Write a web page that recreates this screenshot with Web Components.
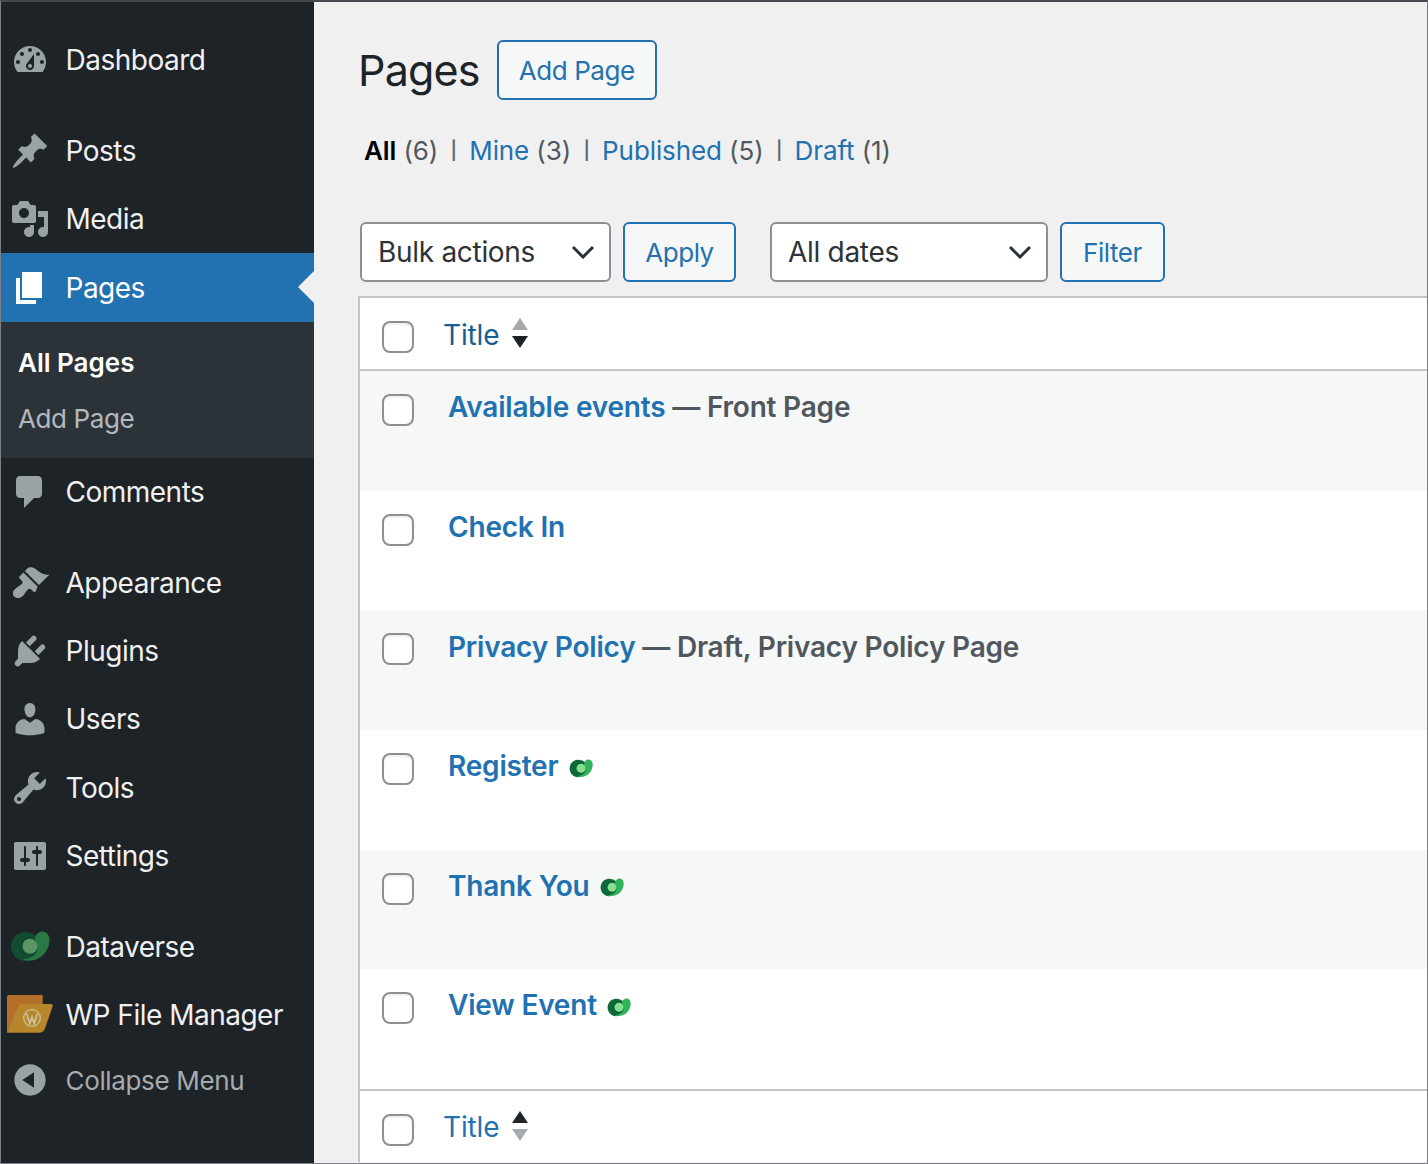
<!DOCTYPE html>
<html lang="en">
<head>
<meta charset="utf-8">
<title>Pages</title>
<style>
  html, body { margin: 0; height: 100%; overflow: hidden; background: #f0f0f1; }
  body { font-family: Inter, "Liberation Sans", sans-serif; }
</style>
</head>
<body>
<wp-admin>
  <wp-sidebar slot="side">
    <wp-menu-item icon="dashboard">Dashboard</wp-menu-item>
    <wp-menu-gap></wp-menu-gap>
    <wp-menu-item icon="post">Posts</wp-menu-item>
    <wp-menu-item icon="media">Media</wp-menu-item>
    <wp-menu-item icon="page" current>Pages</wp-menu-item>
    <wp-submenu>
      <a class="on">All Pages</a>
      <a>Add Page</a>
    </wp-submenu>
    <wp-menu-item icon="comments">Comments</wp-menu-item>
    <wp-menu-gap></wp-menu-gap>
    <wp-menu-item icon="appearance">Appearance</wp-menu-item>
    <wp-menu-item icon="plugins">Plugins</wp-menu-item>
    <wp-menu-item icon="users">Users</wp-menu-item>
    <wp-menu-item icon="tools">Tools</wp-menu-item>
    <wp-menu-item icon="settings">Settings</wp-menu-item>
    <wp-menu-gap></wp-menu-gap>
    <wp-menu-item icon="dataverse">Dataverse</wp-menu-item>
    <wp-menu-item icon="filemanager">WP File Manager</wp-menu-item>
    <wp-menu-item icon="collapse" muted>Collapse Menu</wp-menu-item>
  </wp-sidebar>
  <wp-page-head>Pages</wp-page-head>
  <wp-views></wp-views>
  <wp-tablenav></wp-tablenav>
  <wp-table>
    <wp-head-row sort="desc"></wp-head-row>
    <wp-page-row tint name="Available events" state="Front Page"></wp-page-row>
    <wp-page-row name="Check In"></wp-page-row>
    <wp-page-row tint name="Privacy Policy" state="Draft, Privacy Policy Page"></wp-page-row>
    <wp-page-row name="Register" logo></wp-page-row>
    <wp-page-row tint name="Thank You" logo></wp-page-row>
    <wp-page-row name="View Event" logo></wp-page-row>
    <wp-head-row sort="asc" foot></wp-head-row>
  </wp-table>
</wp-admin>

<script>
const ICONS = {
  dashboard: "M3.76 16h12.48c1.1-1.37 1.76-3.11 1.76-5 0-4.42-3.58-8-8-8s-8 3.58-8 8c0 1.89.66 3.63 1.76 5zM10 4c.55 0 1 .45 1 1s-.45 1-1 1-1-.45-1-1 .45-1 1-1zM6 6c.55 0 1 .45 1 1s-.45 1-1 1-1-.45-1-1 .45-1 1-1zm8 0c.55 0 1 .45 1 1s-.45 1-1 1-1-.45-1-1 .45-1 1-1zm-5.37 5.55L12 7v6c0 1.1-.9 2-2 2s-2-.9-2-2c0-.57.24-1.08.63-1.45zM4 10c.55 0 1 .45 1 1s-.45 1-1 1-1-.45-1-1 .45-1 1-1zm12 0c.55 0 1 .45 1 1s-.45 1-1 1-1-.45-1-1 .45-1 1-1zm-5 3c0-.55-.45-1-1-1s-1 .45-1 1 .45 1 1 1 1-.45 1-1z",
  post: "M10.44 3.02l1.82-1.82 6.36 6.35-1.83 1.82c-1.05-.68-2.48-.57-3.41.36l-.75.75c-.92.93-1.04 2.35-.35 3.41l-1.83 1.82-2.41-2.41-2.8 2.79c-.42.42-3.38 2.71-3.8 2.29s1.86-3.39 2.28-3.81l2.79-2.79L4.1 9.36l1.83-1.82c1.05.69 2.48.57 3.4-.36l.75-.75c.93-.92 1.05-2.35.36-3.41z",
  media: "M13 11V4c0-.55-.45-1-1-1h-1.67L9 1H5L3.67 3H2c-.55 0-1 .45-1 1v7c0 .55.45 1 1 1h10c.55 0 1-.45 1-1zM7 4.5c1.38 0 2.5 1.12 2.5 2.5S8.38 9.5 7 9.5 4.5 8.38 4.5 7 5.62 4.5 7 4.5zM14 6h5v10.5c0 1.38-1.12 2.5-2.5 2.5S14 17.88 14 16.5s1.12-2.5 2.5-2.5c.17 0 .34.02.5.05V9h-3V6zm-4 8.05V13h2v3.5c0 1.38-1.12 2.5-2.5 2.5S7 17.88 7 16.5 8.12 14 9.5 14c.17 0 .34.02.5.05z",
  page: "M6 15V2h10v13H6zm-1 1h8v2H3V5h2v11z",
  comments: "M5 2h9c1.1 0 2 .9 2 2v7c0 1.1-.9 2-2 2h-2l-5 5v-5H5c-1.1 0-2-.9-2-2V4c0-1.1.9-2 2-2z",
  appearance: "M14.48 11.06L7.41 3.99l1.5-1.5c.5-.56 2.3-.47 3.51.32 1.21.8 1.43 1.28 2.91 2.1 1.18.64 2.45 1.26 4.45.85zm-.71.71L6.7 4.7 4.93 6.47c-.39.39-.39 1.02 0 1.41l1.06 1.06c.39.39.39 1.03 0 1.42-.6.6-1.43 1.11-2.21 1.69-.35.26-.7.53-1.01.84C1.43 13.71.96 15.65 2.15 16.85c1.2 1.19 3.14.72 4.36-.51.31-.31.58-.66.84-1.01.58-.78 1.09-1.61 1.69-2.21.39-.39 1.03-.39 1.42 0l1.06 1.06c.39.39 1.02.39 1.41 0z",
  plugins: "M13.11 4.36L9.87 7.6 8 5.73l3.24-3.24c.35-.34 1.05-.2 1.56.32.52.51.66 1.21.31 1.55zm-8 1.77l.91-1.12 9.01 9.01-1.19.84c-.71.71-2.63 1.16-3.82 1.16H6.14L4.9 17.26c-.59.59-1.54.59-2.12 0-.59-.58-.59-1.53 0-2.12l1.24-1.24v-3.88c0-1.13.4-3.19 1.09-3.89zm7.26 3.97l3.24-3.24c.34-.35 1.04-.21 1.55.31.52.51.66 1.21.31 1.55l-3.24 3.25z",
  users: "M10 9.25c-2.27 0-2.73-3.44-2.73-3.44C7 4.02 7.82 2 9.97 2c2.16 0 2.98 2.02 2.71 3.81 0 0-.41 3.44-2.68 3.44zm0 2.57L12.72 10c2.39 0 4.52 2.33 4.52 4.53v2.49s-3.65 1.13-7.24 1.13c-3.65 0-7.24-1.13-7.24-1.13v-2.49c0-2.25 1.94-4.48 4.47-4.48z",
  tools: "M16.68 9.77c-1.34 1.34-3.3 1.67-4.95.99l-5.41 6.52c-.99.99-2.59.99-3.58 0s-.99-2.59 0-3.57l6.52-5.42c-.68-1.65-.35-3.61.99-4.95 1.28-1.28 3.12-1.62 4.72-1.06l-2.89 2.89 2.82 2.82 2.86-2.87c.53 1.58.18 3.39-1.08 4.65zM3.81 16.21c.4.39 1.04.39 1.43 0 .4-.4.4-1.04 0-1.43-.39-.4-1.03-.4-1.43 0-.39.39-.39 1.03 0 1.43z",
  settings: "M18 16V4c0-.55-.45-1-1-1H3c-.55 0-1 .45-1 1v12c0 .55.45 1 1 1h14c.55 0 1-.45 1-1zM8 11h1c.55 0 1 .45 1 1s-.45 1-1 1H8v1.5c0 .28-.22.5-.5.5s-.5-.22-.5-.5V13H6c-.55 0-1-.45-1-1s.45-1 1-1h1V5.5c0-.28.22-.5.5-.5s.5.22.5.5V11zm5-2h-1c-.55 0-1-.45-1-1s.45-1 1-1h1V5.5c0-.28.22-.5.5-.5s.5.22.5.5V7h1c.55 0 1 .45 1 1s-.45 1-1 1h-1v5.5c0 .28-.22.5-.5.5s-.5-.22-.5-.5V9z",
  collapse: "M10 2.16c4.33 0 7.84 3.51 7.84 7.84s-3.51 7.84-7.84 7.84S2.16 14.33 2.16 10 5.71 2.16 10 2.16zm2 11.72V6.12L6.18 9.97z"
};

function dataverseSvg(width, height, dim) {
  // the sidebar copy is dimmed like the other menu icons
  return `<svg width="${width}" height="${height}" viewBox="0 0 24 19" style="display:block;${dim ? "opacity:.6" : ""}">
    <path fill="#0b6a37" d="M9 .8c3 0 5.500 1 7 2.800l-.5 12c-1.500 1.500-4 2.600-6.500 2.600C4.300 18.200.6 14.200.6 9.500S4.300.8 9 .8z"/>
    <circle cx="12" cy="9.300" r="5.800" fill="#0a5f32"/>
    <path fill="#31b35a" d="M19 .5c2.800-.3 4.700 2 4.700 5 0 7-5.700 12.500-12 12.500-1.500 0-3-.4-4-1 3 .1 5.500-.8 7-2.400 1.500-1.600 2-3.300 1.800-5.200-.1-1.300-.6-2.700-1.300-3.900-.8-2 1.500-4.700 3.800-5z"/>
    <circle cx="12" cy="9.300" r="4.500" fill="#86df8e"/>
  </svg>`;
}

function fileManagerSvg() {
  return `<svg width="48" height="40" viewBox="0 0 48 40" style="display:block">
    <path fill="#b4702b" d="M1 2q0-2 2-2H36.700V12H14L1 38z"/>
    <path fill="#b6862a" d="M16 9H44.500c1.700 0 2.600 1 2 2.700L39.500 32c-1.200 3.800-2.800 5.700-6 5.700H1L12 12.500c.9-2.300 2-3.500 4-3.500z"/>
    <circle cx="26" cy="23" r="8.300" fill="none" stroke="#cfc09c" stroke-width="1.300"/>
    <path fill="none" stroke="#cfc09c" stroke-width="1.800" d="M20.500 18.500l3.300 10 2.200-6.500 2.200 6.500 3.200-10"/>
  </svg>`;
}

class WpAdmin extends HTMLElement {
  constructor() {
    super();
    this.attachShadow({ mode: "open" });
    this.shadowRoot.innerHTML = `
      <style>
        :host {
          display: grid;
          grid-template-columns: 313px 1fr;
          box-sizing: border-box;
          height: 1164px;
          overflow: hidden;
          border-top: 2px solid #45484f;
          border-left: 1px solid #7d7f87;
          border-right: 1px solid #7d7f87;
          border-bottom: 1px solid #7d7f87;
          background: #f0f0f1;
        }
        main { padding: 38px 0 0 45px; min-width: 0; overflow: hidden; }
      </style>
      <slot name="side"></slot>
      <main><slot></slot></main>`;
  }
}

class WpSidebar extends HTMLElement {
  constructor() {
    super();
    this.attachShadow({ mode: "open" });
    this.shadowRoot.innerHTML = `
      <style>
        :host { display: block; background: #1d2327; padding-top: 24px; }
      </style>
      <slot></slot>`;
  }
}

class WpMenuGap extends HTMLElement {
  constructor() {
    super();
    this.attachShadow({ mode: "open" });
    this.shadowRoot.innerHTML = `<style>:host { display: block; height: 22.2px; }</style>`;
  }
}

class WpMenuItem extends HTMLElement {
  constructor() {
    super();
    this.attachShadow({ mode: "open" });
  }

  connectedCallback() {
    const name = this.getAttribute("icon");
    let icon = `<svg width="40" height="40" viewBox="0 0 20 20" fill-rule="evenodd"><path d="${ICONS[name]}"/></svg>`;
    if (name === "dataverse") icon = dataverseSvg(40, 33, true);
    if (name === "filemanager") icon = fileManagerSvg();
    this.shadowRoot.innerHTML = `
      <style>
        :host {
          display: flex;
          align-items: center;
          position: relative;
          height: 68.4px;
          color: #f0f0f1;
          font-size: 28px;
          letter-spacing: -.5px;
        }
        :host([current]) { background: #2271b1; color: #fff; }
        :host([muted]) { color: #a7aaad; font-size: 26px; height: 62px; letter-spacing: -.35px; }
        .icon {
          width: 58px;
          margin-right: 6.5px;
          display: flex;
          justify-content: center;
          fill: rgba(240, 246, 252, .6);
          flex: none;
        }
        :host([current]) .icon { fill: #fff; }
        .arrow {
          position: absolute;
          right: 0;
          top: 18px;
          border: 16px solid transparent;
          border-left: 0;
          border-right-color: #f0f0f1;
        }
      </style>
      <span class="icon">${icon}</span>
      <slot></slot>
      ${this.hasAttribute("current") ? '<span class="arrow"></span>' : ""}`;
  }
}

class WpSubmenu extends HTMLElement {
  constructor() {
    super();
    this.attachShadow({ mode: "open" });
    this.shadowRoot.innerHTML = `
      <style>
        :host {
          display: flex;
          flex-direction: column;
          gap: 16px;
          height: 136px;
          box-sizing: border-box;
          padding: 21px 0 0 17px;
          background: #2c3338;
          color: rgba(240, 246, 252, .7);
          font-size: 26px;
          line-height: 40px;
          letter-spacing: -.4px;
        }
        ::slotted(a.on) { color: #fff; font-weight: 600; letter-spacing: 0; }
      </style>
      <slot></slot>`;
  }
}

class WpButton extends HTMLElement {
  constructor() {
    super();
    this.attachShadow({ mode: "open" });
    this.shadowRoot.innerHTML = `
      <style>
        :host {
          display: inline-flex;
          align-items: center;
          justify-content: center;
          box-sizing: border-box;
          height: 60px;
          padding: 0 20px;
          border: 2px solid #2271b1;
          border-radius: 6px;
          background: #f6f7f7;
          color: #2271b1;
          font-size: 26px;
          letter-spacing: -.45px;
          white-space: nowrap;
        }
      </style>
      <slot></slot>`;
  }
}

class WpSelect extends HTMLElement {
  constructor() {
    super();
    this.attachShadow({ mode: "open" });
    this.shadowRoot.innerHTML = `
      <style>
        :host {
          display: inline-flex;
          align-items: center;
          justify-content: space-between;
          box-sizing: border-box;
          height: 60px;
          padding: 0 14px 0 16px;
          border: 2px solid #8c8f94;
          border-radius: 6px;
          background: #fff;
          color: #2c3338;
          font-size: 28px;
          letter-spacing: -.3px;
        }
        svg { display: block; }
      </style>
      <slot></slot>
      <svg width="24" height="14" viewBox="0 0 24 14"><path d="M2 2l10 10L22 2" fill="none" stroke="#2c3338" stroke-width="3"/></svg>`;
  }
}

class WpPageHead extends HTMLElement {
  constructor() {
    super();
    this.attachShadow({ mode: "open" });
    this.shadowRoot.innerHTML = `
      <style>
        :host { display: flex; align-items: center; gap: 18px; color: #1d2327; }
        h1 { margin: 0 -1px 0 -1px; font-size: 43px; font-weight: 400; letter-spacing: -.8px; }
        wp-button { width: 160px; }
      </style>
      <h1><slot></slot></h1>
      <wp-button>Add Page</wp-button>`;
  }
}

class WpViews extends HTMLElement {
  constructor() {
    super();
    this.attachShadow({ mode: "open" });
    this.shadowRoot.innerHTML = `
      <style>
        :host {
          display: flex;
          align-items: center;
          gap: 12px;
          margin: 30px 0 0 5px;
          height: 40px;
          font-size: 26px;
          letter-spacing: -.1px;
          color: #50575e;
        }
        b { color: #000; font-weight: 600; }
        a { color: #2271b1; }
        i { font-style: normal; font-size: 18px; font-weight: 600; width: 7px; text-align: center; color: #646970; }
      </style>
      <span><b>All</b> (6)</span><i>|</i>
      <span><a>Mine</a> (3)</span><i>|</i>
      <span><a>Published</a> (5)</span><i>|</i>
      <span><a>Draft</a> (1)</span>`;
  }
}

class WpTablenav extends HTMLElement {
  constructor() {
    super();
    this.attachShadow({ mode: "open" });
    this.shadowRoot.innerHTML = `
      <style>
        :host { display: flex; gap: 12px; margin: 52px 0 14px 1px; }
        .bulk { width: 251px; }
        .apply { width: 113px; }
        .dates { width: 278px; margin-left: 22px; }
        .filter { width: 105px; }
      </style>
      <wp-select class="bulk">Bulk actions</wp-select>
      <wp-button class="apply">Apply</wp-button>
      <wp-select class="dates">All dates</wp-select>
      <wp-button class="filter">Filter</wp-button>`;
  }
}

class WpTable extends HTMLElement {
  constructor() {
    super();
    this.attachShadow({ mode: "open" });
    this.shadowRoot.innerHTML = `
      <style>
        :host {
          display: block;
          margin-left: -1px;
          background: #fff;
          border-top: 2px solid #c3c4c7;
          border-left: 2px solid #c3c4c7;
        }
      </style>
      <slot></slot>`;
  }
}

class WpCheck extends HTMLElement {
  constructor() {
    super();
    this.attachShadow({ mode: "open" });
    this.shadowRoot.innerHTML = `
      <style>
        :host {
          display: block;
          flex: none;
          box-sizing: border-box;
          width: 32px;
          height: 32px;
          border: 2px solid #8c8f94;
          border-radius: 8px;
          background: #fff;
          box-shadow: inset 0 2px 2px rgba(0, 0, 0, .06);
        }
      </style>`;
  }
}

class WpHeadRow extends HTMLElement {
  constructor() {
    super();
    this.attachShadow({ mode: "open" });
  }

  connectedCallback() {
    const asc = this.getAttribute("sort") === "asc";
    this.shadowRoot.innerHTML = `
      <style>
        :host {
          display: flex;
          align-items: center;
          box-sizing: border-box;
          height: 73px;
          padding-left: 22px;
          border-bottom: 2px solid #c3c4c7;
          color: ${this.hasAttribute("foot") ? "#2271b1" : "#135e96"};
          font-size: 28px;
          letter-spacing: -.15px;
        }
        :host([foot]) { border-bottom: 0; border-top: 2px solid #c3c4c7; padding-top: 2px; }
        wp-check { margin-right: 29px; margin-top: 7px; }
        :host([foot]) wp-check { margin-top: 5px; }
        span { margin-top: 2px; }
        :host([foot]) span { margin-top: 0; }
        svg { display: block; margin-left: 13px; margin-top: -2px; }
      </style>
      <wp-check></wp-check>
      <span>Title</span>
      <svg width="16" height="32" viewBox="0 0 16 32">
        <path d="M8 1l8 12H0z" fill="${asc ? "#1d2327" : "#a7aaad"}"/>
        <path d="M8 31L0 19h16z" fill="${asc ? "#a7aaad" : "#1d2327"}"/>
      </svg>`;
  }
}

class WpPageRow extends HTMLElement {
  constructor() {
    super();
    this.attachShadow({ mode: "open" });
  }

  connectedCallback() {
    const state = this.getAttribute("state");
    this.shadowRoot.innerHTML = `
      <style>
        :host {
          display: flex;
          align-items: flex-start;
          box-sizing: border-box;
          height: 119.67px;
          padding: 16.2px 0 0 22px;
          background: #fff;
          font-size: 28px;
          font-weight: 600;
          line-height: 40px;
          letter-spacing: -.2px;
          color: #50575e;
        }
        :host([tint]) { background: #f6f7f7; }
        wp-check { margin: 6.8px 34px 0 0; }
        a { color: #2271b1; }
        .row { display: flex; align-items: center; white-space: pre; }
        .logo { margin-left: 10.5px; margin-top: 4px; }
      </style>
      <wp-check></wp-check>
      <div class="row"><a>${this.getAttribute("name")}</a>${state ? ` — ${state}` : ""}${this.hasAttribute("logo") ? `<span class="logo">${dataverseSvg(24, 19)}</span>` : ""}</div>`;
  }
}

customElements.define("wp-admin", WpAdmin);
customElements.define("wp-sidebar", WpSidebar);
customElements.define("wp-menu-gap", WpMenuGap);
customElements.define("wp-menu-item", WpMenuItem);
customElements.define("wp-submenu", WpSubmenu);
customElements.define("wp-button", WpButton);
customElements.define("wp-select", WpSelect);
customElements.define("wp-page-head", WpPageHead);
customElements.define("wp-views", WpViews);
customElements.define("wp-tablenav", WpTablenav);
customElements.define("wp-table", WpTable);
customElements.define("wp-check", WpCheck);
customElements.define("wp-head-row", WpHeadRow);
customElements.define("wp-page-row", WpPageRow);
</script>
</body>
</html>
